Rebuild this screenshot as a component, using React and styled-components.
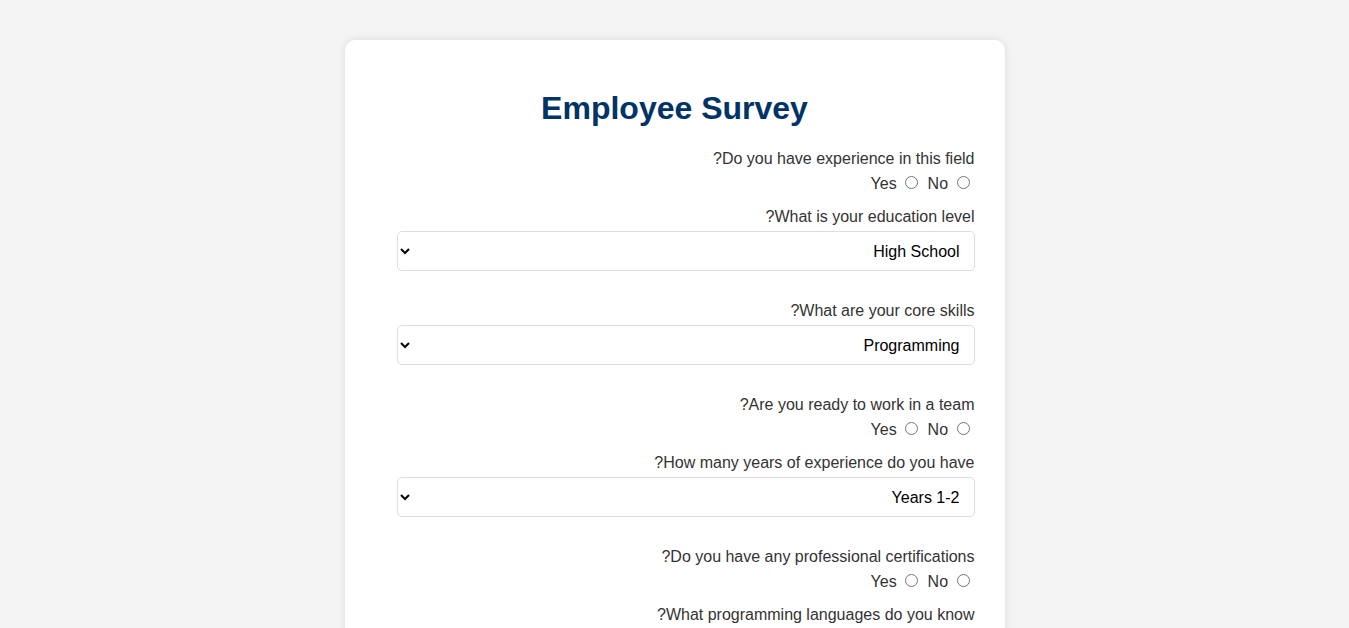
import React from 'react';
import styled, { createGlobalStyle } from 'styled-components';

const GlobalStyle = createGlobalStyle`
  body {
    margin: 0;
    background-color: #f4f4f4;
    font-family: 'Liberation Sans', Arial, sans-serif;
    direction: rtl;
  }
`;

const questions = [
  { type: 'radio', name: 'experience', text: 'Do you have experience in this field?' },
  { type: 'select', name: 'education', text: 'What is your education level?', options: ['High School', 'Diploma', "Bachelor's", "Master's"] },
  { type: 'select', name: 'skills', text: 'What are your core skills?', options: ['Programming', 'Design', 'Marketing', 'Management'] },
  { type: 'radio', name: 'team', text: 'Are you ready to work in a team?' },
  { type: 'select', name: 'years', text: 'How many years of experience do you have?', options: ['Years 1-2', 'Years 3-5', 'Years 5+'] },
  { type: 'radio', name: 'certs', text: 'Do you have any professional certifications?' },
  { type: 'select', name: 'languages', text: 'What programming languages do you know?', options: ['JavaScript', 'Python', 'Java', 'C#'] },
];

const App = () => {
  return (
    <>
      <GlobalStyle />
      <Card>
        <Title>Employee Survey</Title>
        <form>
          {questions.map((q) => (
            <Question key={q.name}>
              <Label>{q.text}</Label>
              {q.type === 'radio' ? (
                <RadioRow>
                  <Radio type="radio" name={q.name} value="yes" /> Yes{' '}
                  <Radio type="radio" name={q.name} value="no" /> No
                </RadioRow>
              ) : (
                <Select name={q.name} defaultValue={q.options[0]}>
                  {q.options.map((o) => (
                    <option key={o}>{o}</option>
                  ))}
                </Select>
              )}
            </Question>
          ))}
        </form>
      </Card>
    </>
  );
};

const Card = styled.div`
  width: 600px;
  margin: 40px auto;
  padding: 30px;
  background-color: #fff;
  border-radius: 10px;
  box-shadow: 0 0 10px rgba(0, 0, 0, 0.1);
`;

const Title = styled.h1`
  text-align: center;
  color: #003366;
  font-size: 32px;
  margin: 20px 0 23px;
`;

const Question = styled.div`
  margin-bottom: 14px;
  color: #333;
  font-size: 16px;
`;

const Label = styled.label`
  display: block;
  line-height: 18px;
  margin-bottom: 5px;
`;

const RadioRow = styled.div`
  line-height: 20px;
`;

const Radio = styled.input`
  margin: 3px 5px 0 4px;
`;

const Select = styled.select`
  display: block;
  width: calc(100% - 22px);
  box-sizing: border-box;
  height: 40px;
  padding: 10px;
  margin-bottom: 31px;
  font-family: 'Liberation Sans', Arial, sans-serif;
  font-size: 16px;
  color: #000;
  background-color: #fff;
  border: 1px solid #ddd;
  border-radius: 5px;
`;

export default App;
